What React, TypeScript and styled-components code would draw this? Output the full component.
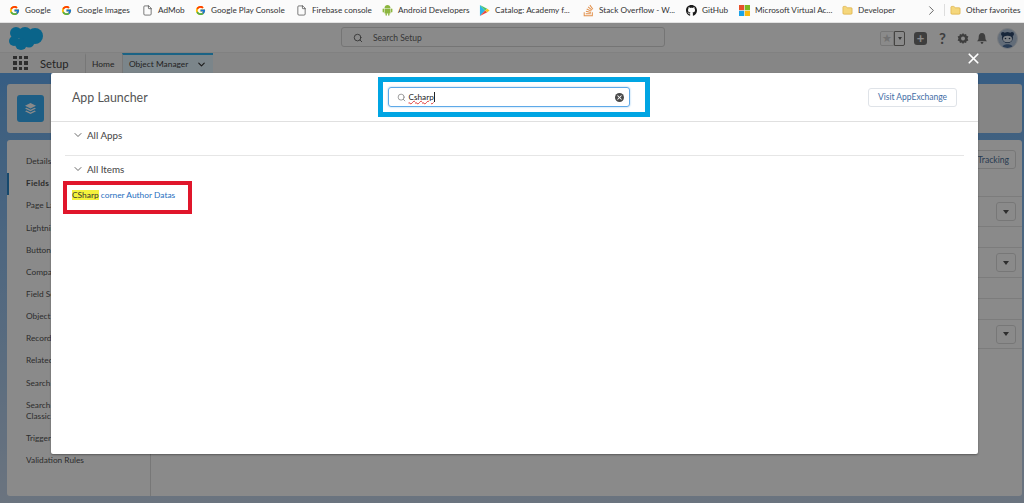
import styled, { createGlobalStyle } from 'styled-components'
import { ChevronDown, ChevronRight, File, Folder, Search, X } from 'lucide-react'
import { FaGithub, FaStackOverflow } from 'react-icons/fa'
import { FcGoogle } from 'react-icons/fc'

const GlobalStyle = createGlobalStyle`
  html, body {
    margin: 0;
    padding: 0;
    background: #fff;
  }
  * {
    box-sizing: border-box;
  }
`

const PlayIcon = () => (
  <svg width="12" height="13" viewBox="0 0 12 13">
    <path d="M1 0.5 L6.6 6.5 L1 12.5 Z" fill="#2bb6e8" />
    <path d="M1 0.5 L9 4.7 L6.6 6.5 Z" fill="#49c26e" />
    <path d="M1 12.5 L9 8.3 L6.6 6.5 Z" fill="#e8473f" />
    <path d="M9 4.7 L11.6 6.5 L9 8.3 L6.6 6.5 Z" fill="#f8c21c" />
  </svg>
)

const WindowsIcon = () => (
  <svg width="11" height="11" viewBox="0 0 11 11">
    <rect width="5.2" height="5.2" fill="#e8502a" />
    <rect x="5.8" width="5.2" height="5.2" fill="#7db81f" />
    <rect y="5.8" width="5.2" height="5.2" fill="#1aa3e8" />
    <rect x="5.8" y="5.8" width="5.2" height="5.2" fill="#f9b90f" />
  </svg>
)

const AndroidIcon = () => (
  <svg width="11" height="12" viewBox="0 0 11 12" fill="#8cb63f">
    <path d="M2.500 3.900 C2.600 2.200 3.900 1.100 5.500 1.100 C7.100 1.100 8.400 2.200 8.500 3.900 Z" />
    <path d="M2.500 4.400 H8.500 V9 C8.500 9.400 8.200 9.600 7.900 9.600 H3.100 C2.800 9.600 2.500 9.400 2.500 9 Z" />
    <rect x="0.600" y="4.400" width="1.400" height="4" rx="0.700" />
    <rect x="9" y="4.400" width="1.400" height="4" rx="0.700" />
    <rect x="3.500" y="9" width="1.400" height="2.800" rx="0.700" />
    <rect x="6.100" y="9" width="1.400" height="2.800" rx="0.700" />
  </svg>
)

const docIcon = <File size={13} color="#333" strokeWidth={1.4} />
const googleIcon = <FcGoogle size={11} />
const folderIcon = <Folder size={13} color="#d9ab3c" fill="#f5d77c" strokeWidth={1.4} />

const bookmarks = [
  { label: 'Google', icon: googleIcon, width: 52 },
  { label: 'Google Images', icon: googleIcon, width: 81 },
  { label: 'AdMob', icon: docIcon, width: 53 },
  { label: 'Google Play Console', icon: googleIcon, width: 101 },
  { label: 'Firebase console', icon: docIcon, width: 86 },
  { label: 'Android Developers', icon: <AndroidIcon />, width: 97 },
  { label: 'Catalog: Academy f...', icon: <PlayIcon />, width: 104 },
  { label: 'Stack Overflow - W...', icon: <FaStackOverflow size={13} color="#e2914c" />, width: 103 },
  { label: 'GitHub', icon: <FaGithub size={13} color="#1b1b1b" />, width: 53 },
  { label: 'Microsoft Virtual Ac...', icon: <WindowsIcon />, width: 103 },
  { label: 'Developer', icon: folderIcon, width: 81 },
]

const sideItems = [
  'Details',
  'Fields & Relationships',
  'Page Layouts',
  'Lightning Record Pages',
  'Buttons, Links, and Actions',
  'Compact Layouts',
  'Field Sets',
  'Object Limits',
  'Record Types',
  'Related Lookup Filters',
  'Search Layouts',
  'Search Layouts for Salesforce Classic',
  'Triggers',
  'Validation Rules',
]

const fieldRows = [
  { height: 30, menu: true },
  { height: 21, menu: false },
  { height: 30, menu: true },
  { height: 21, menu: false },
  { height: 21, menu: false },
  { height: 29, menu: true },
]

export default function App() {
  return (
    <Screen>
      <GlobalStyle />
      <BookmarkBar>
        {bookmarks.map((b) => (
          <Bookmark key={b.label} $width={b.width}>
            <BookmarkIcon>{b.icon}</BookmarkIcon>
            <span>{b.label}</span>
          </Bookmark>
        ))}
        <MoreBookmarks>
          <ChevronRight size={15} color="#444" strokeWidth={1.3} />
        </MoreBookmarks>
        <BarDivider />
        <Bookmark $width={70}>
          <BookmarkIcon>{folderIcon}</BookmarkIcon>
          <span>Other favorites</span>
        </Bookmark>
      </BookmarkBar>

      <Page>
        <GlobalHeader>
          <svg width="36" height="25" viewBox="0 0 36 25" fill="#14b9ff">
            <circle cx="8" cy="7" r="6" />
            <circle cx="17" cy="8" r="7" />
            <circle cx="27" cy="10" r="8" />
            <circle cx="6" cy="15" r="5" />
            <circle cx="13" cy="18" r="6" />
            <circle cx="21" cy="16" r="5.500" />
          </svg>
          <GlobalSearch>
            <Search size={10} color="#555" />
            <span>Search Setup</span>
          </GlobalSearch>
          <HeaderTools>
            <FavoriteGroup>
              <FavoriteStar>★</FavoriteStar>
              <FavoriteCaret />
            </FavoriteGroup>
            <AddTile>+</AddTile>
            <HelpGlyph>?</HelpGlyph>
            <svg width="12" height="13" viewBox="0 0 12 12">
              <path
                d="M6 0.500 L7.200 2 L9.100 1.400 L9.500 3.300 L11.400 4 L10.500 6 L11.400 8 L9.500 8.700 L9.100 10.600 L7.200 10 L6 11.500 L4.800 10 L2.900 10.600 L2.500 8.700 L0.600 8 L1.500 6 L0.600 4 L2.500 3.300 L2.900 1.400 L4.800 2 Z M6 4 A2 2 0 1 0 6 8 A2 2 0 1 0 6 4 Z"
                fill="#747474"
                fillRule="evenodd"
              />
            </svg>
            <svg width="12" height="13" viewBox="0 0 12 12">
              <path
                d="M6 0.500 C8.300 0.500 9.300 2.300 9.300 4.500 C9.300 6.800 10 7.800 11 8.800 L1 8.800 C2 7.800 2.700 6.800 2.700 4.500 C2.700 2.300 3.700 0.500 6 0.500 Z M4.600 9.600 L7.400 9.600 C7.300 10.800 6.700 11.400 6 11.400 C5.300 11.400 4.700 10.800 4.600 9.600 Z"
                fill="#747474"
              />
            </svg>
            <Avatar>
              <svg width="19" height="19" viewBox="0 0 19 19">
                <circle cx="5" cy="5" r="2" fill="#2c466b" />
                <circle cx="14" cy="5" r="2" fill="#2c466b" />
                <circle cx="9.500" cy="8.500" r="5.500" fill="#2c466b" />
                <ellipse cx="9.500" cy="10" rx="4.500" ry="3.200" fill="#e6edf5" />
                <circle cx="7.500" cy="9.500" r="0.800" fill="#22344f" />
                <circle cx="11.500" cy="9.500" r="0.800" fill="#22344f" />
                <path d="M4 19 C4 14 15 14 15 19 Z" fill="#4d6f9c" />
              </svg>
            </Avatar>
          </HeaderTools>
        </GlobalHeader>

        <NavBar>
          <AppGrid>
            {Array.from({ length: 9 }).map((_, i) => (
              <i key={i} />
            ))}
          </AppGrid>
          <AppName>Setup</AppName>
          <NavTab $width={37}>Home</NavTab>
          <NavTab $width={91} $active>
            Object Manager
            <ChevronDown size={11} color="#333" strokeWidth={2.5} />
          </NavTab>
        </NavBar>

        <Workspace>
          <ObjectHeader>
            <ObjectIcon>
              <svg width="13" height="13" viewBox="0 0 13 13">
                <path d="M6.500 1 L12 3.700 L6.500 6.400 L1 3.700 Z" fill="#fff" />
                <path d="M2.500 5.800 L6.500 7.800 L10.500 5.800 L12 6.500 L6.500 9.200 L1 6.500 Z" fill="#fff" />
                <path d="M2.500 8.600 L6.500 10.600 L10.500 8.600 L12 9.300 L6.500 12 L1 9.300 Z" fill="#fff" />
              </svg>
            </ObjectIcon>
          </ObjectHeader>
          <DetailCard>
            <SideNav>
              {sideItems.map((item) => (
                <SideItem key={item} $active={item.startsWith('Fields')}>
                  {item}
                </SideItem>
              ))}
            </SideNav>
            <FieldPanel>
              <PanelTop>
                <GhostButton>Set History Tracking</GhostButton>
              </PanelTop>
              {fieldRows.map((row, i) => (
                <FieldRow key={i} $height={row.height}>
                  {row.menu && (
                    <RowMenu>
                      <span />
                    </RowMenu>
                  )}
                </FieldRow>
              ))}
            </FieldPanel>
          </DetailCard>
        </Workspace>
        <Scrim />
      </Page>

      <CloseButton>
        <X size={17} color="#fff" strokeWidth={2.4} />
      </CloseButton>

      <Modal>
        <ModalHeader>
          <ModalTitle>App Launcher</ModalTitle>
          <BlueFrame>
            <SearchField>
              <Search size={9} color="#8a8a8a" strokeWidth={2.2} />
              <SearchText>
                <Typed>Csharp</Typed>
              </SearchText>
              <ClearIcon>
                <X size={7} color="#fff" strokeWidth={3.5} />
              </ClearIcon>
            </SearchField>
          </BlueFrame>
          <VisitButton>Visit AppExchange</VisitButton>
        </ModalHeader>

        <Section $height={34} $divider>
          <ChevronDown size={12} color="#444" strokeWidth={1.6} />
          All Apps
        </Section>
        <Section $height={25}>
          <ChevronDown size={12} color="#444" strokeWidth={1.6} />
          All Items
        </Section>
        <RedFrame>
          <Highlight>CSharp</Highlight> corner Author Datas
        </RedFrame>
      </Modal>
    </Screen>
  )
}

const Screen = styled.div`
  position: relative;
  width: 1024px;
  height: 503px;
  overflow: hidden;
  font-family: Lato, 'Open Sans', 'Liberation Sans', sans-serif;
`

const BookmarkBar = styled.div`
  display: flex;
  align-items: center;
  height: 23px;
  padding: 0 0 2px 9px;
  background: #fbfbfb;
  border-bottom: 1px solid #e2e2e2;
  color: #333;
  font-size: 8.2px;
`

const Bookmark = styled.div<{ $width: number }>`
  display: flex;
  flex: none;
  align-items: center;
  gap: 5px;
  width: ${(p) => p.$width}px;
  white-space: nowrap;
`

const BookmarkIcon = styled.span`
  display: flex;
  flex: none;
  justify-content: center;
  width: 11px;
`

const MoreBookmarks = styled.div`
  display: flex;
  justify-content: center;
  width: 16px;
`

const BarDivider = styled.div`
  width: 1px;
  height: 12px;
  margin: 0 5px;
  background: #ddd;
`

const Page = styled.div`
  position: relative;
  display: flex;
  flex-direction: column;
  height: 480px;
  background: linear-gradient(180deg, #51a7fc 0, #71b0ed 18%, #c6d6ea 100%);
`

const Scrim = styled.div`
  position: absolute;
  inset: 0;
  background: rgba(0, 0, 0, 0.46);
`

const GlobalHeader = styled.header`
  position: relative;
  display: flex;
  flex: none;
  align-items: center;
  height: 29px;
  padding: 1px 6px 0 8px;
  background: #fff;
`

const GlobalSearch = styled.div`
  position: absolute;
  top: 4px;
  left: 341px;
  display: flex;
  align-items: center;
  gap: 10px;
  width: 324px;
  height: 20px;
  padding: 1px 0 0 11px;
  border: 1px solid #d8d8d8;
  border-radius: 3px;
  color: #666;
  font-size: 8.5px;
`

const HeaderTools = styled.div`
  display: flex;
  align-items: center;
  gap: 7px;
  margin-left: auto;
`

const FavoriteGroup = styled.div`
  display: flex;
  height: 15px;
  margin-right: 2px;
`

const FavoriteStar = styled.span`
  display: flex;
  align-items: center;
  justify-content: center;
  width: 14px;
  border: 1px solid #ddd;
  border-radius: 2px 0 0 2px;
  color: #d2d2d2;
  font-size: 11px;
`

const FavoriteCaret = styled.span`
  position: relative;
  width: 11px;
  border: 1px solid #807e7b;
  border-radius: 0 2px 2px 0;

  &::after {
    content: '';
    position: absolute;
    top: 5px;
    left: 2.5px;
    border: 2.5px solid transparent;
    border-top: 3px solid #666;
  }
`

const AddTile = styled.span`
  display: flex;
  align-items: center;
  justify-content: center;
  width: 13px;
  height: 13px;
  margin-right: 5px;
  border-radius: 3px;
  background: #747474;
  color: #fff;
  font-size: 13px;
  font-weight: 700;
  line-height: 1;
`

const HelpGlyph = styled.span`
  margin-right: 4px;
  color: #747474;
  font-size: 15px;
  font-weight: 700;
  line-height: 1;
`

const Avatar = styled.div`
  display: flex;
  align-items: center;
  justify-content: center;
  width: 21px;
  height: 21px;
  margin-left: 2px;
  overflow: hidden;
  border: 1px solid #dfe3e8;
  border-radius: 50%;
  background: #b6c8de;
`

const NavBar = styled.nav`
  display: flex;
  flex: none;
  align-items: stretch;
  height: 21px;
  padding-left: 13px;
  background: #f7f7f7;
  border-top: 1px solid #eee;
`

const AppGrid = styled.div`
  display: grid;
  grid-template-columns: repeat(3, 3.5px);
  gap: 2px;
  align-content: center;
  margin-right: 12.500px;

  i {
    width: 3.5px;
    height: 3.5px;
    background: #555;
  }
`

const AppName = styled.div`
  display: flex;
  align-items: center;
  width: 45px;
  color: #444;
  font-size: 11.2px;
`

const NavTab = styled.div<{ $width: number; $active?: boolean }>`
  display: flex;
  flex: none;
  align-items: center;
  gap: 8px;
  width: ${(p) => p.$width}px;
  padding-left: 6px;
  border-left: 1px solid #ddd;
  border-top: 2px solid ${(p) => (p.$active ? '#30b8f5' : 'transparent')};
  background: ${(p) => (p.$active ? '#e4f6ff' : 'transparent')};
  color: #444;
  font-size: 8.4px;
`

const Workspace = styled.div`
  display: flex;
  flex: 1;
  flex-direction: column;
  gap: 7px;
  padding: 11px 2px 7px 7px;
`

const ObjectHeader = styled.section`
  display: flex;
  flex: none;
  align-items: center;
  height: 49px;
  padding-left: 10px;
  border-radius: 3px;
  background: #f5f5f5;
`

const ObjectIcon = styled.div`
  display: flex;
  align-items: center;
  justify-content: center;
  width: 27px;
  height: 27px;
  border-radius: 3px;
  background: #36aef5;
`

const DetailCard = styled.section`
  display: flex;
  flex: 1;
  border-radius: 3px;
  background: #fff;
`

const SideNav = styled.ul`
  flex: none;
  width: 144px;
  margin: 0;
  padding: 10.500px 0 0;
  border-right: 1px solid #ddd;
  list-style: none;
`

const SideItem = styled.li<{ $active?: boolean }>`
  padding: 5.580px 8px 5.580px ${(p) => (p.$active ? 17 : 19)}px;
  border-left: ${(p) => (p.$active ? '2px solid #2a86c8' : 'none')};
  color: #555;
  font-size: 8.3px;
  font-weight: ${(p) => (p.$active ? 700 : 400)};
  letter-spacing: ${(p) => (p.$active ? 0.25 : 0)}px;
  line-height: 11px;
`

const FieldPanel = styled.div`
  flex: 1;
  padding-top: 10px;
`

const PanelTop = styled.div`
  display: flex;
  justify-content: flex-end;
  height: 47px;
  padding-right: 6px;
  border-bottom: 1px solid #e6e6e6;
`

const GhostButton = styled.div`
  display: flex;
  align-items: center;
  height: 19px;
  padding: 0 6px;
  border: 1px solid #ddd;
  border-radius: 3px;
  color: #4a6f96;
  font-size: 8.6px;
`

const FieldRow = styled.div<{ $height: number }>`
  display: flex;
  align-items: center;
  justify-content: flex-end;
  height: ${(p) => p.$height}px;
  padding-right: 6px;
  border-bottom: 1px solid #e6e6e6;
`

const RowMenu = styled.div`
  display: flex;
  align-items: center;
  justify-content: center;
  width: 20px;
  height: 19px;
  border: 1px solid #ddd;
  border-radius: 3px;

  span {
    margin-top: 3px;
    border: 3.5px solid transparent;
    border-top: 4px solid #555;
  }
`

const CloseButton = styled.div`
  position: absolute;
  top: 50px;
  left: 965px;
  display: flex;
`

const Modal = styled.div`
  position: absolute;
  top: 73px;
  left: 51px;
  width: 927px;
  height: 381px;
  border-radius: 2px;
  background: #fff;
  box-shadow: 0 1px 2px rgba(0, 0, 0, 0.35);
`

const ModalHeader = styled.div`
  display: grid;
  grid-template-columns: 1fr 272px 1fr;
  align-items: center;
  height: 49px;
  padding: 0 21px;
  border-bottom: 1px solid #e0e0e0;
`

const ModalTitle = styled.h2`
  margin: 0;
  color: #555;
  font-size: 12.400px;
  font-weight: 400;
`

const BlueFrame = styled.div`
  display: flex;
  align-items: center;
  height: 40px;
  margin: 0 1px 0 -1px;
  padding-left: 5px;
  border: 5px solid #00a5e3;
`

const SearchField = styled.div`
  display: flex;
  align-items: center;
  width: 242px;
  height: 20px;
  padding: 0 5px 0 8px;
  border: 1px solid #5ea9e8;
  border-radius: 3px;
  box-shadow: 0 0 2px #8ec4f0;
`

const SearchText = styled.div`
  flex: 1;
  margin-left: 3px;
  color: #222;
  font-size: 8.2px;
`

const Typed = styled.span`
  border-right: 1px solid #222;
  text-decoration: underline wavy #e03a3a 1px;
  text-underline-offset: 0;
`

const ClearIcon = styled.span`
  display: flex;
  align-items: center;
  justify-content: center;
  width: 9px;
  height: 9px;
  border-radius: 50%;
  background: #4a4a4a;
`

const VisitButton = styled.button`
  justify-self: end;
  width: 89px;
  height: 19px;
  padding: 0;
  border: 1px solid #dfe3e8;
  border-radius: 3px;
  background: #fff;
  color: #3f6ea6;
  font-family: inherit;
  font-size: 8.5px;
`

const Section = styled.div<{ $height: number; $divider?: boolean }>`
  display: flex;
  align-items: center;
  gap: 3px;
  height: ${(p) => p.$height}px;
  margin: 0 14px;
  padding-left: 7px;
  padding-bottom: ${(p) => (p.$divider ? 7 : 0)}px;
  border-bottom: ${(p) => (p.$divider ? '1px solid #e6e6e6' : 'none')};
  color: #444;
  font-size: 9.8px;
`

const RedFrame = styled.div`
  display: flex;
  align-items: center;
  width: 129px;
  height: 33px;
  margin-left: 12px;
  padding: 0 0 5px 5px;
  border: 4px solid #e0162b;
  color: #1f6fc0;
  font-size: 8.4px;
  white-space: pre;
`

const Highlight = styled.mark`
  background: #f4f23c;
  color: #333;
`
